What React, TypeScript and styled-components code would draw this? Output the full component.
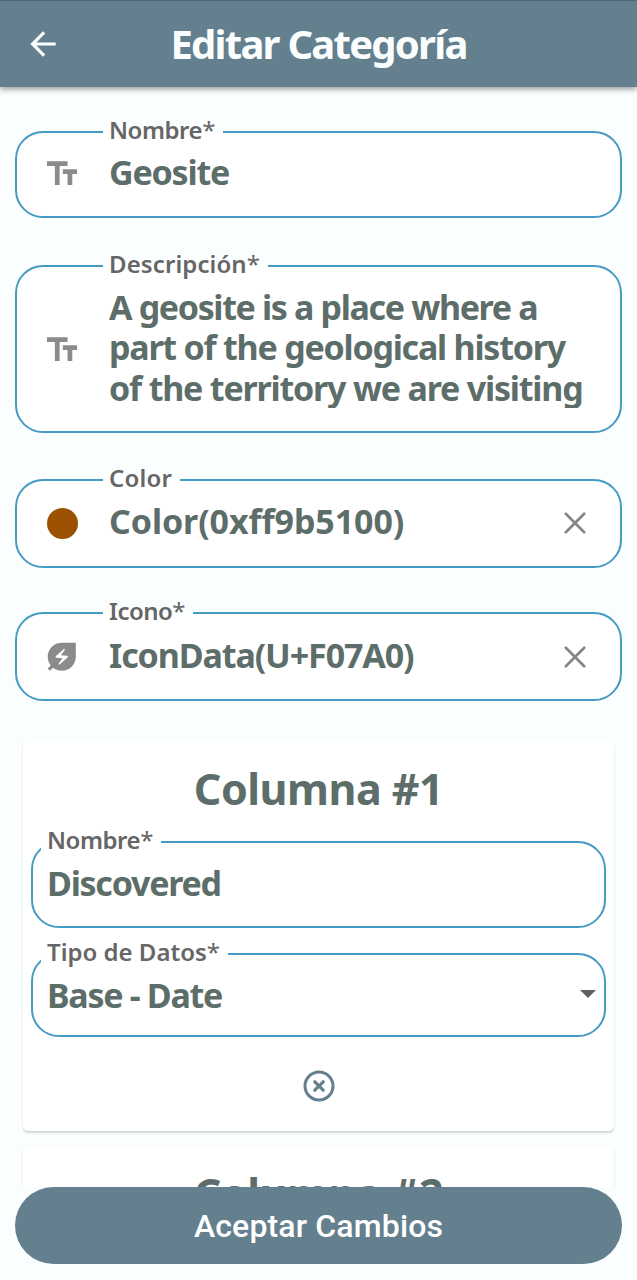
import React from "react";
import styled, { createGlobalStyle } from "styled-components";

const GlobalStyle = createGlobalStyle`
  * { box-sizing: border-box; }
  body { margin: 0; background: #fbfeff; }
`;

const Screen = styled.div`
  display: flex;
  flex-direction: column;
  height: 1280px;
  overflow: hidden;
  background: #fbfeff;
  font-family: "Noto Sans", "Open Sans", sans-serif;
  font-weight: 700;
  color: #5d6e6a;
`;

const AppBar = styled.header`
  flex: none;
  display: grid;
  grid-template-columns: 86px 1fr 86px;
  align-items: center;
  height: 87px;
  background: #64808e;
  border-top: 1px solid #486a7b;
  box-shadow: 0 2px 6px rgba(0, 0, 0, 0.42);
  z-index: 1;
`;

const BackButton = styled.button`
  display: flex;
  justify-content: center;
  padding: 0;
  border: 0;
  background: none;
  color: #fbfeff;
`;

const Title = styled.h1`
  margin: 0;
  text-align: center;
  white-space: nowrap;
  font-size: 40px;
  line-height: 54px;
  font-weight: 700;
  letter-spacing: -1.75px;
  color: #fbfeff;
`;

const Form = styled.main`
  flex: 1;
  min-height: 0;
  overflow: hidden;
  display: flex;
  flex-direction: column;
  padding: 28px 15px 0;
`;

const FieldBox = styled.fieldset<{ $height: number; $gap: number; $inset: number }>`
  flex: none;
  min-width: 0;
  height: ${(p) => p.$height}px;
  margin: 0 0 ${(p) => p.$gap}px;
  padding: 0 0 0 ${(p) => p.$inset}px;
  border: 2px solid #459bc2;
  border-radius: 28px;
  background: #fff;
`;

const Label = styled.legend<{ $indent: number; $tracking: number }>`
  margin-left: ${(p) => p.$indent}px;
  padding: 1px 8px 6px 6px;
  font-size: 24px;
  line-height: 27px;
  font-weight: 600;
  letter-spacing: ${(p) => p.$tracking}px;
  color: #666;
`;

const Star = styled.span`
  font-weight: 400;
`;

const Row = styled.div<{ $top: number }>`
  display: flex;
  align-items: center;
  margin-top: ${(p) => p.$top}px;
`;

const Leading = styled.div`
  flex: none;
  display: flex;
  justify-content: center;
  width: 90px;
  margin: 4px 2px 0 0;
  color: #8b8b8b;
`;

const Value = styled.div<{ $tracking: number }>`
  flex: 1;
  white-space: nowrap;
  font-size: 34px;
  line-height: 40.3px;
  letter-spacing: ${(p) => p.$tracking}px;
`;

const TextLines = styled.div`
  flex: 1;
  height: 121px;
  overflow: hidden;
  white-space: nowrap;
  font-size: 34px;
  line-height: 40.3px;
`;

const TextLine = styled.div<{ $tracking: number }>`
  letter-spacing: ${(p) => p.$tracking}px;
`;

const Trailing = styled.button<{ $right: number; $drop: number }>`
  display: flex;
  margin: ${(p) => p.$drop}px ${(p) => p.$right}px 0 0;
  padding: 0;
  border: 0;
  background: none;
  color: #858585;
`;

const Swatch = styled.span`
  width: 31px;
  height: 31px;
  border-radius: 50%;
  background: #9b5100;
`;

const Card = styled.section`
  flex: none;
  display: flex;
  flex-direction: column;
  height: 390px;
  margin: 0 8px 15px;
  padding: 19px 8px 0;
  border-radius: 5px;
  background: #fff;
  box-shadow: 0 2px 2px rgba(0, 0, 0, 0.16), 0 0 2px rgba(0, 60, 90, 0.06);
`;

const CardTitle = styled.h2`
  margin: 0 0 7px;
  text-align: center;
  white-space: nowrap;
  font-size: 43px;
  line-height: 58px;
  font-weight: 700;
  letter-spacing: -0.5px;
`;

const RemoveButton = styled.button`
  display: flex;
  align-self: center;
  margin-top: 33px;
  padding: 0;
  border: 0;
  background: none;
  color: #64808e;
`;

const Footer = styled.footer`
  flex: none;
  height: 93px;
  padding: 0 15px 16px;
`;

const SubmitButton = styled.button`
  width: 100%;
  height: 77px;
  padding: 0;
  border: 0;
  border-radius: 39px;
  background: #64808e;
  color: #fff;
  font-family: Roboto, sans-serif;
  font-size: 32px;
  font-weight: 500;
  letter-spacing: 0.15px;
`;

const TextSizeIcon = () => (
  <svg width="38" height="38" viewBox="0 0 24 24" fill="currentColor">
    <path d="M2.5 4v3h5v12h3V7h5V4h-13zm19 5h-9v3h3v7h3v-7h3V9z" />
  </svg>
);

const LeafIcon = () => (
  <svg width="37.5" height="37.5" viewBox="0 0 24 24" fill="currentColor">
    <path d="M12 3c-4.8 0-9 3.86-9 9 0 2.12.74 4.07 1.97 5.61L3 19.59 4.41 21l1.97-1.97C7.93 20.26 9.88 21 12 21c2.3 0 4.61-.88 6.36-2.64C20.12 16.61 21 14.3 21 12V3h-9zm3.83 9.26-5.16 4.63c-.16.15-.41.14-.56-.01-.14-.14-.16-.36-.04-.52l2.44-3.33-4.05-.4c-.44-.04-.63-.59-.3-.89l5.16-4.63c.16-.15.41-.14.56.01.14.14.16.36.04.52l-2.44 3.33 4.05.4c.44.04.62.59.29.89z" />
  </svg>
);

const ClearIcon = () => (
  <svg width="24" height="24" viewBox="0 0 24 24" fill="none" stroke="currentColor" strokeWidth="2.7" strokeLinecap="round">
    <path d="M2.8 2.8l18.4 18.4M21.2 2.8L2.8 21.2" />
  </svg>
);

const BackIcon = () => (
  <svg width="38" height="38" viewBox="0 0 24 24" fill="currentColor">
    <path d="M20 11H7.83l5.59-5.59L12 4l-8 8 8 8 1.41-1.41L7.83 13H20v-2z" />
  </svg>
);

const CaretIcon = () => (
  <svg width="16" height="8" viewBox="0 0 16 8" fill="#606060">
    <path d="M0 0h16L8 8z" />
  </svg>
);

const RemoveIcon = () => (
  <svg width="32" height="32" viewBox="0 0 32 32" fill="none" stroke="currentColor" strokeWidth="3">
    <circle cx="16" cy="16" r="14" />
    <path d="M11.8 11.8l8.4 8.4M20.2 11.8l-8.4 8.4" strokeWidth="3.2" strokeLinecap="round" />
  </svg>
);

type FieldProps = {
  label: string;
  required?: boolean;
  labelTracking?: number;
  height: number;
  gap: number;
  top: number;
  nested?: boolean;
  icon?: React.ReactNode;
  children: React.ReactNode;
};

const Field = ({ label, required, labelTracking = 0, height, gap, top, nested, icon, children }: FieldProps) => (
  <FieldBox $height={height} $gap={gap} $inset={nested ? 14 : 0}>
    <Label $indent={nested ? -6 : 86} $tracking={labelTracking}>
      {label}
      {required && <Star>*</Star>}
    </Label>
    <Row $top={top}>
      {icon && <Leading>{icon}</Leading>}
      {children}
    </Row>
  </FieldBox>
);

export default function App() {
  return (
    <>
      <GlobalStyle />
      <Screen>
        <AppBar>
          <BackButton aria-label="Volver"><BackIcon /></BackButton>
          <Title>Editar Categoría</Title>
        </AppBar>
        <Form>
          <Field label="Nombre" required labelTracking={-0.45} height={103} gap={31} top={2} icon={<TextSizeIcon />}>
            <Value $tracking={-1.2}>Geosite</Value>
          </Field>
          <Field label="Descripción" required labelTracking={0.1} height={184} gap={30} top={4} icon={<TextSizeIcon />}>
            <TextLines>
              <TextLine $tracking={-1.35}>A geosite is a place where a</TextLine>
              <TextLine $tracking={-1.23}>part of the geological history</TextLine>
              <TextLine $tracking={-1.2}>of the territory we are visiting</TextLine>
            </TextLines>
          </Field>
          <Field label="Color" labelTracking={0.2} height={105} gap={28} top={4} icon={<Swatch />}>
            <Value $tracking={-0.1}>Color(0xff9b5100)</Value>
            <Trailing $right={33} $drop={4} aria-label="Borrar color"><ClearIcon /></Trailing>
          </Field>
          <Field label="Icono" required labelTracking={-0.5} height={105} gap={40} top={4} icon={<LeafIcon />}>
            <Value $tracking={-1.1}>IconData(U+F07A0)</Value>
            <Trailing $right={33} $drop={4} aria-label="Borrar icono"><ClearIcon /></Trailing>
          </Field>
          <Card>
            <CardTitle>Columna #1</CardTitle>
            <Field nested label="Nombre" required labelTracking={-0.45} height={103} gap={9} top={4}>
              <Value $tracking={-1.25}>Discovered</Value>
            </Field>
            <Field nested label="Tipo de Datos" required height={100} gap={0} top={4}>
              <Value $tracking={-1.3}>Base - Date</Value>
              <Trailing $right={8} $drop={-2} aria-label="Abrir lista"><CaretIcon /></Trailing>
            </Field>
            <RemoveButton aria-label="Quitar columna"><RemoveIcon /></RemoveButton>
          </Card>
          <Card>
            <CardTitle>Columna #2</CardTitle>
          </Card>
        </Form>
        <Footer>
          <SubmitButton>Aceptar Cambios</SubmitButton>
        </Footer>
      </Screen>
    </>
  );
}
